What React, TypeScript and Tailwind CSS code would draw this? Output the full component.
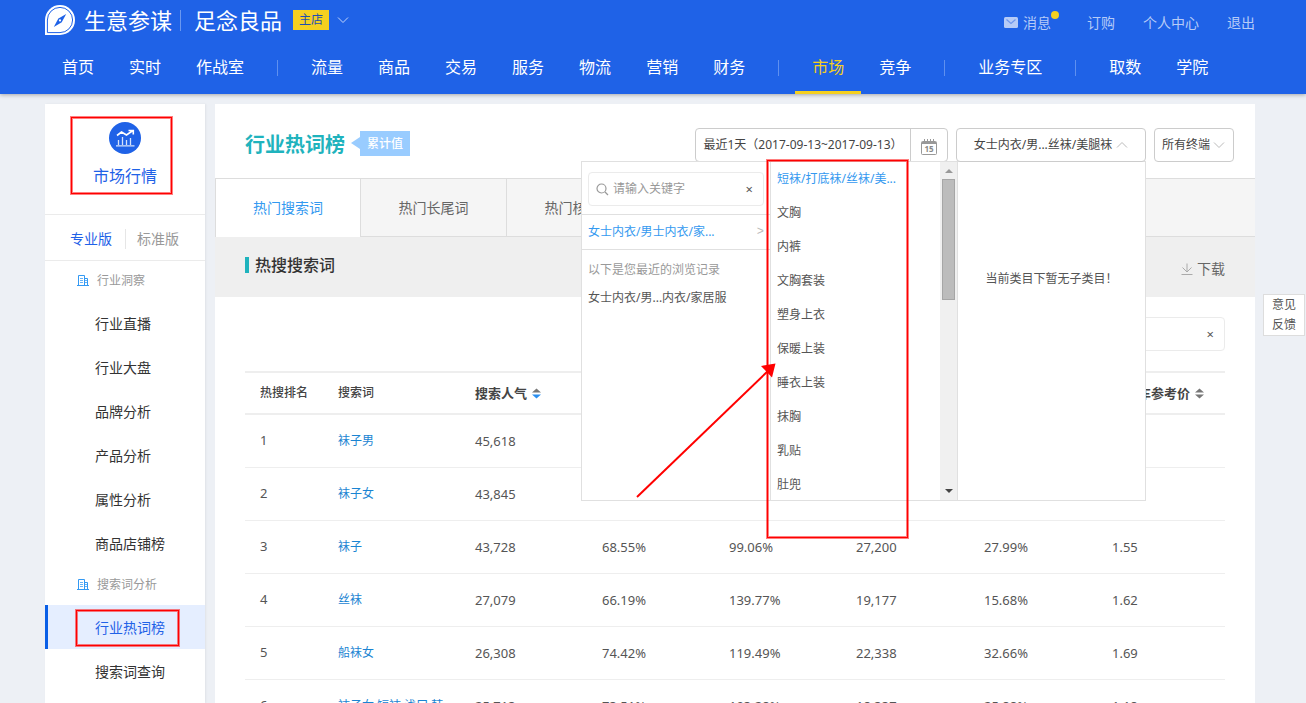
import React from 'react';

type NavEntry = { label: string; active?: boolean } | null;

const NAV: NavEntry[] = [
  { label: '首页' },
  { label: '实时' },
  { label: '作战室' },
  null,
  { label: '流量' },
  { label: '商品' },
  { label: '交易' },
  { label: '服务' },
  { label: '物流' },
  { label: '营销' },
  { label: '财务' },
  null,
  { label: '市场', active: true },
  { label: '竞争' },
  null,
  { label: '业务专区' },
  null,
  { label: '取数' },
  { label: '学院' },
];

const MENU = [
  {
    title: '行业洞察',
    items: ['行业直播', '行业大盘', '品牌分析', '产品分析', '属性分析', '商品店铺榜'],
  },
  { title: '搜索词分析', items: ['行业热词榜', '搜索词查询'] },
];

const TABS = ['热门搜索词', '热门长尾词', '热门核心词'];

const SUBCATEGORIES = [
  '短袜/打底袜/丝袜/美...',
  '文胸',
  '内裤',
  '文胸套装',
  '塑身上衣',
  '保暖上装',
  '睡衣上装',
  '抹胸',
  '乳贴',
  '肚兜',
];

const ROWS: string[][] = [
  ['1', '袜子男', '45,618', '', '', '', '', ''],
  ['2', '袜子女', '43,845', '', '', '', '', ''],
  ['3', '袜子', '43,728', '68.55%', '99.06%', '27,200', '27.99%', '1.55'],
  ['4', '丝袜', '27,079', '66.19%', '139.77%', '19,177', '15.68%', '1.62'],
  ['5', '船袜女', '26,308', '74.42%', '119.49%', '22,338', '32.66%', '1.69'],
  ['6', '袜子女 短袜 浅口 韩', '25,713', '73.51%', '103.28%', '18,337', '25.88%', '1.18'],
];

const MARK =
  'pointer-events-none absolute border border-[#ff0000] shadow-[0_0_0_1px_rgba(255,0,0,0.5),inset_0_0_0_1px_rgba(255,0,0,0.5)]';

function Chevron({ up = false, className = '' }: { up?: boolean; className?: string }) {
  return (
    <svg viewBox="0 0 12 8" className={`h-2 w-3 shrink-0 ${className}`} fill="none" stroke="currentColor" aria-hidden="true">
      <path d={up ? 'M1 6.5 6 1.5 11 6.5' : 'M1 1.5 6 6.5 11 1.5'} />
    </svg>
  );
}

function Logo() {
  return (
    <svg viewBox="0 0 30 30" className="size-[30px] shrink-0" aria-hidden="true">
      <path d="M0 30V15A15 15 0 1 1 15 30Z" fill="#fff" />
      <path d="M2.4 27.6V15A12.6 12.6 0 1 1 15 27.6Z" fill="none" stroke="#1f62e7" strokeWidth="1" />
      <path d="M21.2 9 16.7 17.2 13 13.7Z M8.8 22 13.2 13.7 16.8 17.3Z" fill="#1f62e7" />
      <circle cx="15" cy="15.4" r="1.1" fill="#fff" />
    </svg>
  );
}

function BuildingIcon() {
  return (
    <svg viewBox="0 0 12 12" className="size-3 shrink-0" fill="none" stroke="#3399f3" aria-hidden="true">
      <path d="M1.5 10.5V0.500H7.5V10.500M7.5 3.500H10.500V10.500M0 10.500H12" />
      <path d="M3 3.500H6M3 5.500H6M3 7.500H6M8 5.500H10M8 7.500H10" stroke="#66b3f6" />
    </svg>
  );
}

function SortIcon({ active = false }: { active?: boolean }) {
  return (
    <svg viewBox="0 0 9 11" className="h-[11px] w-[9px] shrink-0" aria-hidden="true">
      <path d="M4.5 0.500 9 4.600H0Z" fill="#777" />
      <path d="M4.5 10.500 9 6.400H0Z" fill={active ? '#2b8ff0' : '#777'} />
    </svg>
  );
}

function Header() {
  return (
    <header className="relative z-30 bg-[#1f62e7] pr-[51px] pl-[45px] text-white shadow-[0_1px_4px_rgba(0,0,0,0.3)]">
      <div className="flex h-10 items-center">
        <Logo />
        <span className="ml-[9px] text-[22px] leading-10">生意参谋</span>
        <span className="ml-2 h-[21px] w-px bg-[#6a98f0]" />
        <span className="ml-[13px] text-[22px] leading-10">足念良品</span>
        <span className="ml-[11px] bg-[#f5d020] px-[6px] text-xs leading-5 text-[#1f4fb0]">主店</span>
        <button type="button" aria-label="切换店铺" className="ml-2 text-[#c3d5fa]">
          <Chevron />
        </button>
        <div className="ml-auto flex items-center gap-7 pt-[5px] text-sm text-[#b6cbf7]">
          <a href="#messages" className="relative mr-2 flex items-center gap-[5px]">
            <svg viewBox="0 0 14 11" className="h-[11px] w-[14px]" aria-hidden="true">
              <rect width="14" height="11" rx="1.5" fill="#b6cbf7" />
              <path d="M2.5 2.5 7 6.5 11.5 2.5" fill="none" stroke="#6e97ee" strokeWidth="1.2" />
            </svg>
            消息
            <span className="absolute -top-[2px] -right-2 size-2 rounded-full bg-[#f5d020]" />
          </a>
          <a href="#order">订购</a>
          <a href="#profile">个人中心</a>
          <a href="#logout">退出</a>
        </div>
      </div>
      <nav className="flex h-[54px] gap-px text-base">
        {NAV.map((entry, i) =>
          entry === null ? (
            <span key={i} className="flex w-[31px] items-center justify-center pt-[2px]">
              <span className="h-4 w-px bg-[#5f90ef]" />
            </span>
          ) : (
            <a
              key={i}
              href={`#nav-${i}`}
              className={
                entry.active
                  ? 'flex items-center border-y-[3px] border-t-transparent border-b-[#f5d020] px-[17px] text-[#f5d020]'
                  : 'flex items-center px-[17px]'
              }
            >
              {entry.label}
            </a>
          ),
        )}
      </nav>
    </header>
  );
}

function Sidebar() {
  return (
    <aside className="w-40 shrink-0 bg-white shadow-[1px_0_2px_rgba(0,0,0,0.06)]">
      <div className="relative flex h-[111px] flex-col items-center border-b border-[#ebebeb] pt-[18px]">
        <svg viewBox="0 0 32 32" className="size-8" fill="none" aria-hidden="true">
          <circle cx="16" cy="16" r="16" fill="#1f62e7" />
          <path d="M8 13.5 12.5 10 17.5 13 24 8.5M19.5 8.5H24.3V12.5" stroke="#fff" strokeWidth="1.6" />
          <path d="M9.5 23V18M13.5 23V15M17.5 23V18M21.5 23V16M7 23.8H25.5" stroke="#d5e2fb" strokeWidth="1.3" />
        </svg>
        <span className="mt-[10px] text-base text-[#1f62e7]">市场行情</span>
        <div className={`${MARK} top-[13px] left-[26px] h-[77px] w-[101px]`} />
      </div>
      <div className="flex h-[46px] items-center border-b border-[#ebebeb] pl-[25px] text-sm">
        <span className="flex items-center pt-[2px]">
          <a href="#pro" className="text-[#1f62e7]">专业版</a>
          <span className="mr-[11px] ml-[13px] h-5 w-px bg-[#e6e6e6]" />
          <a href="#standard" className="text-[#999]">标准版</a>
        </span>
      </div>
      {MENU.map((group) => (
        <section key={group.title}>
          <h2 className="flex h-10 items-center gap-2 pl-8 text-xs text-[#999]">
            <BuildingIcon />
            {group.title}
          </h2>
          <ul>
            {group.items.map((item) => {
              const active = item === '行业热词榜';
              return (
                <li key={item} className="relative">
                  <a
                    href={`#${item}`}
                    className={
                      active
                        ? 'flex h-11 items-center border-l-[3px] border-[#0a5fe6] bg-[#e5eeff] pt-[2px] pl-[47px] text-sm text-[#1f62e7]'
                        : 'flex h-11 items-center pt-[2px] pl-[50px] text-sm text-[#333]'
                    }
                  >
                    {item}
                  </a>
                  {active && <div className={`${MARK} top-[5px] left-[31px] h-9 w-[103px]`} />}
                </li>
              );
            })}
          </ul>
        </section>
      ))}
    </aside>
  );
}

function CategoryPanel() {
  return (
    <div className="absolute top-[33px] right-0 z-10 flex h-[340px] w-[565px] border border-[#e0e0e0] bg-white text-xs text-[#555]">
      <div className="w-[189px] shrink-0 border-r border-[#e0e0e0]">
        <div className="border-b border-[#e0e0e0] px-[6px] pt-[10px] pb-2">
          <label className="flex h-[34px] items-center rounded border border-[#ebebeb] px-[7px]">
            <svg viewBox="0 0 13 13" className="size-[13px] shrink-0" fill="none" stroke="#999" strokeWidth="1.2" aria-hidden="true">
              <circle cx="5.5" cy="5.5" r="4.5" />
              <path d="M9 9 12 12" />
            </svg>
            <input
              type="text"
              aria-label="搜索类目"
              placeholder="请输入关键字"
              className="ml-1 w-0 flex-1 text-xs outline-none placeholder:text-[#999]"
            />
            <button type="button" aria-label="清空" className="px-[3px] text-[13px] leading-none text-[#555]">×</button>
          </label>
        </div>
        <button type="button" className="flex h-[35px] w-full items-center justify-between border-b border-[#e0e0e0] px-[6px] text-[#3399f0]">
          <span>女士内衣/男士内衣/家...</span>
          <span className="font-mono text-[#bbb]">&gt;</span>
        </button>
        <p className="mt-[10px] px-[6px] leading-5 text-[#999]">以下是您最近的浏览记录</p>
        <button type="button" className="mt-2 px-[6px] leading-5">女士内衣/男...内衣/家居服</button>
      </div>
      <div className="flex w-[187px] shrink-0 overflow-hidden border-r border-[#e0e0e0]">
        <ul className="flex-1 pl-[6px]">
          {SUBCATEGORIES.map((name, i) => (
            <li key={name}>
              <button type="button" className={i === 0 ? 'h-[34px] text-[#3399f0]' : 'h-[34px]'}>
                {name}
              </button>
            </li>
          ))}
        </ul>
        <div className="flex w-[17px] flex-col items-center bg-[#f0f0f0]">
          <svg viewBox="0 0 8 4" className="mt-[7px] mb-[6px] h-1 w-2 shrink-0" fill="#999" aria-hidden="true">
            <path d="M4 0 8 4H0Z" />
          </svg>
          <div className="h-[121px] w-[13px] border border-[#a6a6a6] bg-[#bcbcbc]" />
          <svg viewBox="0 0 8 4" className="mt-auto mb-[7px] h-1 w-2 shrink-0" fill="#444" aria-hidden="true">
            <path d="M0 0H8L4 4Z" />
          </svg>
        </div>
      </div>
      <p className="flex-1 pt-[107px] text-center leading-5">当前类目下暂无子类目！</p>

      <div className={`${MARK} -top-[2px] left-[185px] h-[378px] w-[141px]`} />
      <svg viewBox="0 0 142 136" className="pointer-events-none absolute top-[200px] left-[53px] h-[136px] w-[142px]" aria-hidden="true">
        <path d="M2 135 134 8" stroke="#ff0000" strokeWidth="2" />
        <path d="M126 4 140.500 1.500 137 15.500Z" fill="#ff0000" />
      </svg>
    </div>
  );
}

function TitleBar() {
  return (
    <div className="pt-6 pr-[21px] pb-4 pl-[30px]">
      <div className="flex h-[34px] items-center gap-2">
        <h1 className="text-xl font-bold text-[#1fb3bd]">行业热词榜</h1>
        <div className="flex items-center pb-1 pl-px">
          <svg viewBox="0 0 9 12" className="-ml-[3px] h-3 w-[9px]" fill="#99ccff" aria-hidden="true">
            <path d="M9 0V12L0 6Z" />
          </svg>
          <span className="bg-[#99ccff] px-[7px] text-xs leading-[25px] font-medium text-white">累计值</span>
        </div>
        <div className="ml-auto flex h-[34px] rounded border border-[#ccc] text-xs text-[#444]">
          <button type="button" className="w-[214px] text-center whitespace-nowrap [text-spacing-trim:space-all]">
            最近1天（2017-09-13~2017-09-13）
          </button>
          <button type="button" aria-label="选择日期" className="flex w-[37px] items-center justify-center border-l border-[#ccc] pt-1">
            <svg viewBox="0 0 16 16" className="size-4" fill="none" stroke="#999" aria-hidden="true">
              <rect x="0.500" y="2.500" width="15" height="13" rx="1" />
              <path d="M1 3.500H15M1 4.500H15" />
              <path d="M3.500 0V3M6.500 0V3M9.500 0V3M12.500 0V3" />
              <text x="8" y="13" textAnchor="middle" fill="#888" stroke="none" className="text-[8px] font-bold">15</text>
            </svg>
          </button>
        </div>
        <div className="relative">
          <button
            type="button"
            aria-expanded="true"
            className="relative z-20 flex h-[34px] w-[190px] items-center justify-center gap-1 rounded border border-[#ccc] bg-white text-xs text-[#444]"
          >
            女士内衣/男...丝袜/美腿袜
            <Chevron up className="text-[#bbb]" />
          </button>
          <CategoryPanel />
        </div>
        <div className="relative flex items-center text-[#bbb]">
          <select aria-label="终端" className="h-[34px] w-20 appearance-none rounded border border-[#ccc] bg-white pl-[7px] text-xs text-[#444]">
            <option>所有终端</option>
          </select>
          <Chevron className="pointer-events-none absolute right-[9px]" />
        </div>
      </div>
    </div>
  );
}

function KeywordTable() {
  return (
    <table className="mt-5 w-full table-fixed border-collapse text-left text-[#555]">
      <colgroup>
        <col className="w-[78px]" />
        <col className="w-[137px]" />
        <col className="w-[127px]" />
        <col className="w-[127px]" />
        <col className="w-[127px]" />
        <col className="w-[128px]" />
        <col className="w-[128px]" />
        <col className="w-[128px]" />
      </colgroup>
      <thead>
        <tr className="h-[42px] border-y-2 border-[#eee] text-xs whitespace-nowrap text-[#444]">
          <th className="pl-[15px] font-medium">热搜排名</th>
          <th className="pl-[15px] font-medium">搜索词</th>
          <th className="pl-[15px] text-[13px] font-bold" aria-sort="descending">
            <button type="button" className="flex items-center gap-[5px] pt-[2px]">
              搜索人气
              <SortIcon active />
            </button>
          </th>
          <td />
          <td />
          <td />
          <td />
          <th className="pl-[15px] text-[13px] font-bold">
            <button type="button" className="flex items-center gap-[5px] pt-[2px]">
              直通车参考价
              <SortIcon />
            </button>
          </th>
        </tr>
      </thead>
      <tbody>
        {ROWS.map((row) => (
          <tr key={row[0]} className="h-[53px] border-b border-[#eee] text-[13px] whitespace-nowrap">
            {row.map((cell, i) => (
              <td key={i} className={i === 0 ? 'pl-[15px]' : i === 1 ? 'pl-[15px] text-xs' : 'pt-[2px] pl-[15px]'}>
                {i === 1 ? (
                  <a href={`#keyword-${row[0]}`} className="text-[#1a84d2]">
                    {cell}
                  </a>
                ) : (
                  cell
                )}
              </td>
            ))}
          </tr>
        ))}
      </tbody>
    </table>
  );
}

export default function App() {
  return (
    <div className="flex h-screen flex-col overflow-hidden bg-[#edf0f5] font-['Noto_Sans','Noto_Sans_CJK_SC',sans-serif]">
      <Header />
      <div className="flex min-h-0 flex-1 gap-[10px] pt-[10px] pr-[51px] pl-[45px]">
        <Sidebar />
        <main className="min-w-0 flex-1 bg-white">
          <TitleBar />
          <div className="flex h-[59px] border-t border-[#ddd] bg-[#f5f5f5] text-sm">
            {TABS.map((tab, i) => (
              <button
                key={tab}
                type="button"
                className={
                  i === 0
                    ? 'w-[146px] border-x border-[#ddd] bg-white text-[#3399f0]'
                    : 'w-[146px] border-r border-b border-[#ddd] text-[#666]'
                }
              >
                {tab}
              </button>
            ))}
            <span className="flex-1 border-b border-[#ddd]" />
          </div>
          <div className="flex h-[60px] items-center justify-between bg-[#efefef] px-[30px]">
            <h2 className="flex items-center gap-[6px] pb-1 text-base font-medium text-[#333]">
              <span className="h-4 w-1 bg-[#1fb3bd]" />
              热搜搜索词
            </h2>
            <button type="button" className="flex items-center gap-1 pt-1 text-sm text-[#666]">
              <svg viewBox="0 0 12 12" className="size-3" fill="none" stroke="#aaa" aria-hidden="true">
                <path d="M6 0.500V9M1.500 4.500 6 9 10.500 4.500M0.500 11.500H11.500" />
              </svg>
              下载
            </button>
          </div>
          <div className="px-[30px] pt-5">
            <div className="flex justify-end">
              <div className="flex h-[34px] w-[176px] items-center rounded border border-[#ebebeb] pr-[7px] pl-2">
                <input type="text" aria-label="搜索关键词" className="w-0 flex-1 text-xs outline-none" />
                <button type="button" aria-label="清空" className="px-[3px] text-[13px] leading-none text-[#555]">×</button>
              </div>
            </div>
            <KeywordTable />
          </div>
        </main>
      </div>
      <button
        type="button"
        className="fixed top-[294px] right-px w-[42px] border border-[#ddd] bg-white px-2 text-xs leading-5 text-[#555]"
      >
        意见反馈
      </button>
    </div>
  );
}
